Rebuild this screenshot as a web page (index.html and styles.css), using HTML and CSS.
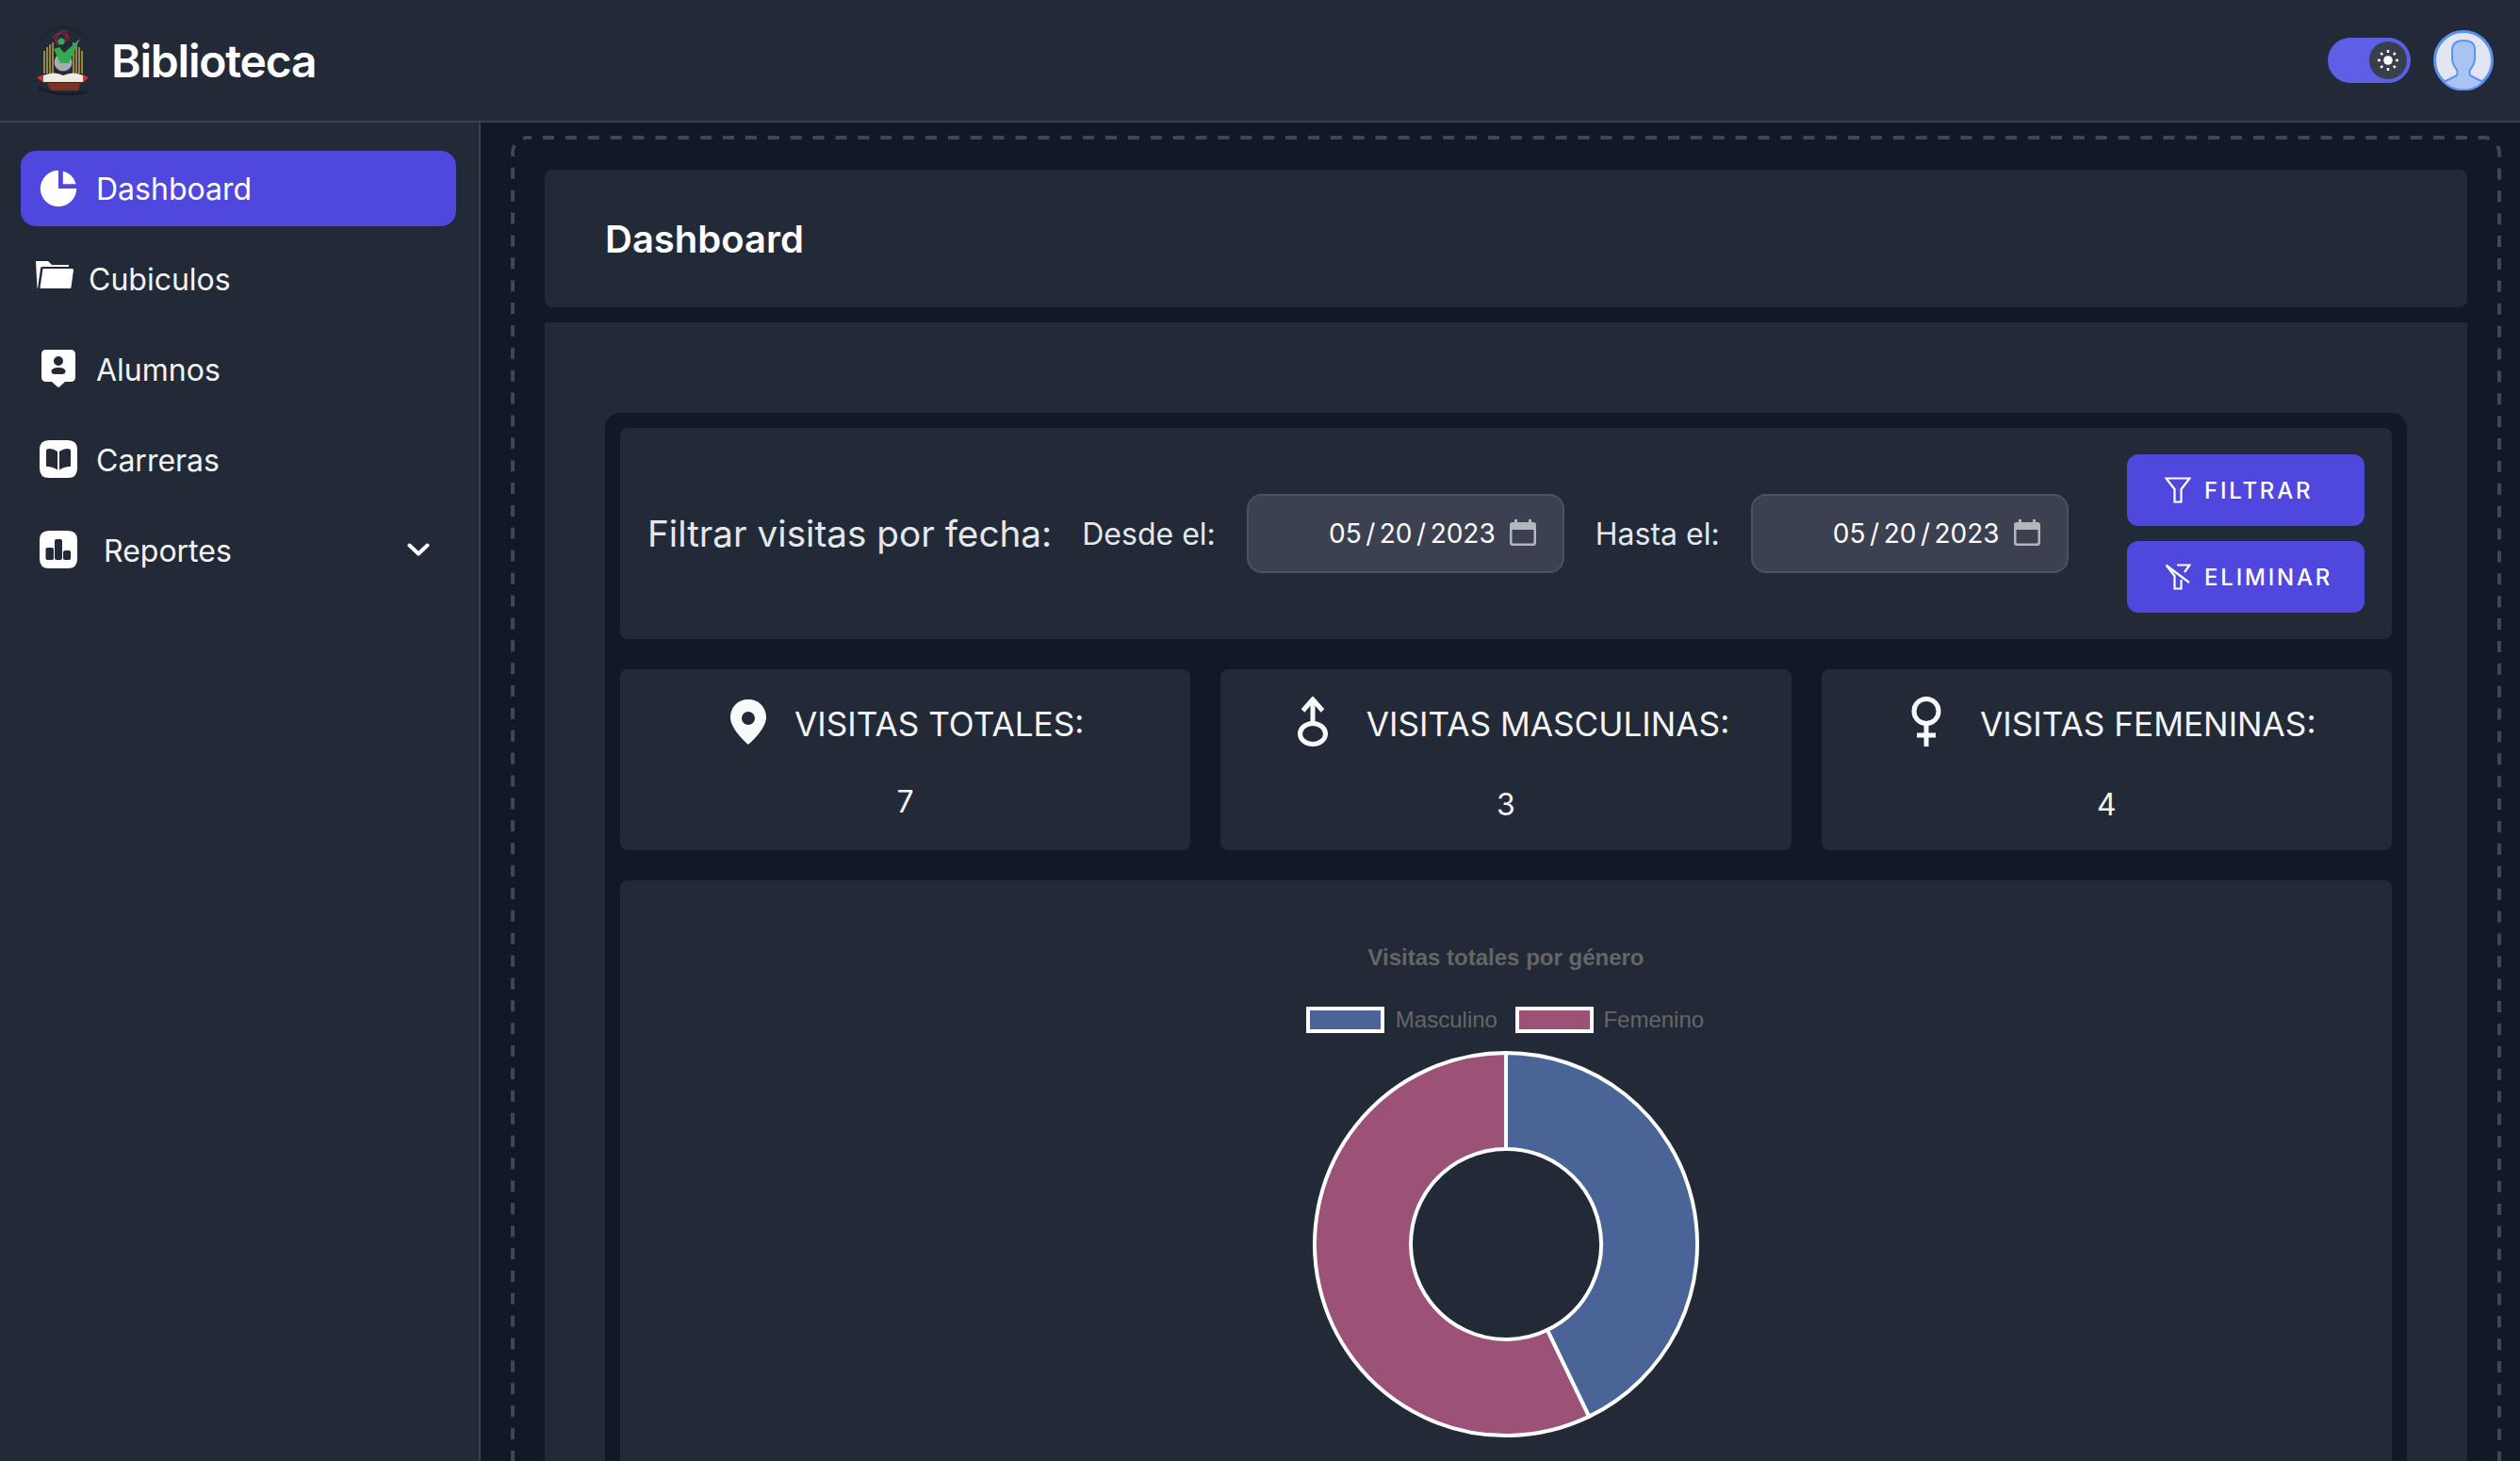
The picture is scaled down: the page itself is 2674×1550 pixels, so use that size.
FILE: index.html
```html
<!DOCTYPE html>
<html lang="en">
<head>
  <meta charset="UTF-8">
  <meta name="viewport" content="width=device-width, initial-scale=1.0">
  <title>Biblioteca</title>
  <link rel="stylesheet" href="styles.css">
</head>
<body>
  <header class="topbar">
    <div class="brand">
      <!-- school crest -->
      <svg class="crest" viewBox="39 24 56 80">
        <path id="crest-top" d="M41 46 Q66 14 93 46" fill="none"/>
        <text class="crest-text"><textPath href="#crest-top" startOffset="50%" text-anchor="middle">Instituto Tecnológico</textPath></text>
        <path d="M41 93 Q66 104 92 97" fill="none" stroke="#141a22" stroke-width="3.5" stroke-dasharray="2 1"/>
        <g fill="none" stroke="#d3b941" stroke-width="1.3">
          <path d="M47 78V54M50 78V50M53 78V47M56 78V45"/>
          <path d="M87 78V54M84 78V50M81 78V47M78 78V45"/>
        </g>
        <g fill="none" stroke="#a0232d" stroke-width="1.1">
          <ellipse cx="65" cy="40" rx="8" ry="4.500"/>
          <ellipse cx="65" cy="40" rx="4.500" ry="8" transform="rotate(30 65 40)"/>
        </g>
        <circle cx="67" cy="66" r="9.500" fill="#a8acb0"/>
        <circle cx="65" cy="44" r="3.500" fill="#35a852"/>
        <path d="M57 52 L63 50 L68 56 L85 41 L73 67 H64Z" fill="#35a852"/>
        <path d="M50 88 H85 L83 96 H54Z" fill="#7c3326"/>
        <path d="M39 82 L47 79 V88 L44 86Z" fill="#c9352b"/>
        <path d="M94 82 L87 79 V88 L90 86Z" fill="#c9352b"/>
        <path d="M46 80 Q58 75 67 80 Q78 75 88 80 V87 H46Z" fill="#eeeae0"/>
      </svg>
      <span class="brand-name">Biblioteca</span>
    </div>
    <div class="top-actions">
      <div class="toggle">
        <span class="toggle-knob">
          <svg width="24" height="24" viewBox="0 0 24 24" fill="none" stroke="#fff" stroke-width="2.4">
            <circle cx="12" cy="12" r="4.8" fill="#fff" stroke="none"/>
            <path d="M12 1v3M12 20v3M1 12h3M20 12h3M4.2 4.2l2 2M17.8 17.8l2 2M4.2 19.8l2-2M17.8 6.2l2-2"/>
          </svg>
        </span>
      </div>
      <svg class="avatar" viewBox="0 0 64 64">
        <circle cx="32" cy="32" r="30.5" fill="#e2e6f2" stroke="#5b93ee" stroke-width="3"/>
        <path d="M11 55 L25 48 Q26 46 25 42 Q20 36 20 30 L20 20 Q21 11 32 11 Q44 11 44 20 V30 Q44 36 39 42 Q38 46 39 48 L53 55 A30 30 0 0 1 11 55Z" fill="#a9c3f3" stroke="#5b93ee" stroke-width="2"/>
      </svg>
    </div>
  </header>

  <div class="layout">
    <aside class="sidebar">
      <a class="side-item active">
        <svg class="ic-dash" viewBox="0 0 20 20" fill="#fff"><path d="M2 10a8 8 0 018-8v8h8a8 8 0 11-16 0z"/><path d="M12 2.252A8.014 8.014 0 0117.748 8H12V2.252z"/></svg>
        Dashboard
      </a>
      <a class="side-item">
        <svg class="ic-folder" viewBox="0 0 40 29" fill="#fff"><path d="M0 0H13L17 4H35V6H7Q5 6 5 8L2 29H1.5Z"/><path d="M7.5 8H38.5Q40 8 40 9.5L37.5 27.5Q37.3 29 36 29H5L4.5 28Z"/></svg>
        Cubiculos
      </a>
      <a class="side-item">
        <svg class="ic-student" viewBox="0 0 36 40" fill="#fff" fill-rule="evenodd"><path d="M5 0H31Q36 0 36 5V29Q36 34 31 34H25L19 39.500Q18 40 17 39.500L11 34H5Q0 34 0 29V5Q0 0 5 0ZM18 7A5 5 0 1 0 18 17A5 5 0 1 0 18 7ZM18 19C13.500 19 10.500 20.500 10.500 23C10.500 25 12 26 14 26H22C24 26 25.500 25 25.500 23C25.500 20.500 22.500 19 18 19Z"/></svg>
        Alumnos
      </a>
      <a class="side-item">
        <svg class="ic-book" viewBox="0 0 40 40" fill="#fff" fill-rule="evenodd"><path d="M10 0H30Q40 0 40 10V30Q40 40 30 40H10Q0 40 0 30V10Q0 0 10 0ZM7 11V27Q7 28 8 28Q14 28 19 31.500V12Q13 8 8 9.500Q7 10 7 11ZM33 11V27Q33 28 32 28Q26 28 21 31.500V12Q27 8 32 9.500Q33 10 33 11Z"/></svg>
        Carreras
      </a>
      <a class="side-item">
        <svg class="ic-chart" viewBox="0 0 40 40" fill="#fff" fill-rule="evenodd"><path d="M10 0H30Q40 0 40 10V30Q40 40 30 40H10Q0 40 0 30V10Q0 0 10 0ZM8 18Q6.500 18 6.500 20V29Q6.500 31 8 31H13.500Q15 31 15 29V20Q15 18 13.500 18ZM18 9Q16 9 16 11V29Q16 31 18 31H22Q24 31 24 29V11Q24 9 22 9ZM27 21Q25 21 25 23V29Q25 31 27 31H31.500Q33 31 33 29V23Q33 21 31.500 21Z"/></svg>
        <span class="grow">Reportes</span>
        <svg class="chevron" viewBox="0 0 24 14" fill="none" stroke="#fff" stroke-width="4" stroke-linecap="round" stroke-linejoin="round"><path d="M2.500 2.500L12 11.500L21.500 2.500"/></svg>
      </a>
    </aside>

    <main class="main">
      <div class="dash-box">
        <svg class="dash-line"><rect class="dash-rect" x="2" y="2" rx="16" ry="16"/></svg>

        <div class="page-head"><h1>Dashboard</h1></div>

        <section class="panel">
          <div class="panel-inner">
            <div class="filter-card">
              <span class="filter-title">Filtrar visitas por fecha:</span>
              <label class="filter-label">Desde el:</label>
              <div class="date-field">
                <span class="date-text">05<i>/</i>20<i>/</i>2023</span>
                <svg class="cal" viewBox="0 0 28 28"><path d="M5 0H8V3H20V0H23V3H25Q28 3 28 6V25Q28 28 25 28H3Q0 28 0 25V6Q0 3 3 3H5ZM2.500 11V24Q2.500 25.500 4 25.500H24Q25.500 25.500 25.500 24V11Z" fill="#b3b6bd" fill-rule="evenodd"/></svg>
              </div>
              <label class="filter-label">Hasta el:</label>
              <div class="date-field">
                <span class="date-text">05<i>/</i>20<i>/</i>2023</span>
                <svg class="cal" viewBox="0 0 28 28"><path d="M5 0H8V3H20V0H23V3H25Q28 3 28 6V25Q28 28 25 28H3Q0 28 0 25V6Q0 3 3 3H5ZM2.500 11V24Q2.500 25.500 4 25.500H24Q25.500 25.500 25.500 24V11Z" fill="#b3b6bd" fill-rule="evenodd"/></svg>
              </div>
              <div class="filter-btns">
                <button class="btn">
                  <svg viewBox="0 0 28 28" fill="none" stroke="#fff" stroke-width="2.200"><path d="M1.500 1.500H26.500L17.500 13V26.500H10.500V13Z"/></svg>
                  FILTRAR
                </button>
                <button class="btn">
                  <svg viewBox="0 0 28 28" fill="none" stroke="#fff" stroke-width="2.200"><path d="M13 1.500H26.500L21 9M2 2L26 20M1.500 1.500L10.500 13V26.500H17.500V17"/></svg>
                  ELIMINAR
                </button>
              </div>
            </div>

            <div class="stats">
              <div class="stat stat-total">
                <div class="stat-head">
                  <svg class="ic-pin" viewBox="0 0 38 48" fill="#f9fafb" fill-rule="evenodd"><path d="M19 0C8 0 0 8 0 19C0 32 19 48 19 48S38 32 38 19C38 8 30 0 19 0ZM19 13A7 7 0 1 1 19 27A7 7 0 1 1 19 13Z"/></svg>
                  <span class="stat-label">VISITAS TOTALES:</span>
                </div>
                <div class="stat-value">7</div>
              </div>
              <div class="stat stat-male">
                <div class="stat-head">
                  <svg class="ic-gender" viewBox="0 0 32 53" fill="none" stroke="#f9fafb" stroke-width="5"><ellipse cx="16" cy="39.500" rx="13.500" ry="11"/><path d="M16 28V3M5.500 15L16 3L26.500 15"/></svg>
                  <span class="stat-label">VISITAS MASCULINAS:</span>
                </div>
                <div class="stat-value">3</div>
              </div>
              <div class="stat stat-female">
                <div class="stat-head">
                  <svg class="ic-gender" viewBox="0 0 32 53" fill="none" stroke="#f9fafb" stroke-width="5"><circle cx="16" cy="15.500" r="13"/><path d="M16 29V53M6 41H26"/></svg>
                  <span class="stat-label">VISITAS FEMENINAS:</span>
                </div>
                <div class="stat-value">4</div>
              </div>
            </div>

            <div class="chart-card">
              <div class="chart-title">Visitas totales por género</div>
              <div class="legend">
                <span class="swatch swatch-blue"></span><span class="legend-text">Masculino</span>
                <span class="swatch swatch-pink"></span><span class="legend-text">Femenino</span>
              </div>
              <svg class="donut" viewBox="0 0 414 414" stroke="#fff" stroke-width="4">
                <path d="M207 4A203 203 0 0 1 295.080 389.900L250.820 298A101 101 0 0 0 207 106Z" fill="#4a6498"/>
                <path d="M295.080 389.900A203 203 0 1 1 207 4L207 106A101 101 0 1 0 250.820 298Z" fill="#9b5276"/>
              </svg>
            </div>
          </div>
        </section>
      </div>
    </main>
  </div>
</body>
</html>
```

FILE: styles.css
```css
html, body {
  height: 100%;
  margin: 0;
  overflow: hidden;
}
body {
  display: flex;
  flex-direction: column;
  background-color: #121926;
  color: #fff;
  font-family: Inter, "Noto Sans", sans-serif;
}

/* top bar */
.topbar {
  display: flex;
  align-items: center;
  justify-content: space-between;
  flex: none;
  height: 128px;
  padding: 0 28px 0 39px;
  background-color: #232a37;
  border-bottom: 2px solid #3a404d;
}
.brand {
  display: flex;
  align-items: center;
  gap: 23px;
}
.crest {
  width: 56px;
  height: 80px;
}
.crest-text {
  font-size: 6.500px;
  fill: #141a22;
  font-family: "Liberation Serif", serif;
}
.brand-name {
  font-size: 48px;
  font-weight: 600;
  letter-spacing: -1.200px;
}
.top-actions {
  display: flex;
  align-items: center;
  gap: 24px;
}
.toggle {
  display: flex;
  align-items: center;
  justify-content: flex-end;
  width: 88px;
  height: 48px;
  padding-right: 4px;
  box-sizing: border-box;
  border-radius: 24px;
  background-color: #5d5fe6;
}
.toggle-knob {
  display: flex;
  align-items: center;
  justify-content: center;
  width: 40px;
  height: 40px;
  border-radius: 50%;
  background-color: #393e4d;
}
.avatar {
  width: 64px;
  height: 64px;
}

/* sidebar */
.layout {
  display: flex;
  flex: 1;
  min-height: 0;
}
.sidebar {
  flex: none;
  display: flex;
  flex-direction: column;
  gap: 16px;
  box-sizing: border-box;
  width: 510px;
  padding: 30px 24px 0 22px;
  background-color: #232a37;
  border-right: 2px solid #3a404d;
}
.side-item {
  display: flex;
  align-items: center;
  height: 80px;
  padding-left: 20px;
  border-radius: 16px;
  font-size: 32px;
  color: #f3f4f6;
}
.side-item.active {
  background-color: #5047de;
  color: #fff;
}
.grow {
  flex: 1;
}
.ic-dash {
  width: 48px;
  height: 48px;
  margin: 0 16px 0 -4px;
}
.ic-folder {
  width: 40px;
  height: 29px;
  margin: 0 16px 9px -4px;
}
.ic-student {
  width: 36px;
  height: 40px;
  margin: 0 22px 2px 2px;
}
.ic-book {
  width: 40px;
  height: 40px;
  margin: 0 20px 2px 0;
}
.ic-chart {
  width: 40px;
  height: 40px;
  margin: 0 28px 2px 0;
}
.chevron {
  width: 24px;
  height: 14px;
  margin: 0 28px 2px 0;
}

/* main area */
.main {
  flex: 1;
  min-width: 0;
  padding: 14px 20px 0 32px;
}
.dash-box {
  position: relative;
  display: flex;
  flex-direction: column;
  gap: 16px;
  box-sizing: border-box;
  height: 1813px;
  padding: 36px;
}
.dash-line {
  position: absolute;
  top: 0;
  left: 0;
  width: 100%;
  height: 100%;
  pointer-events: none;
}
.dash-rect {
  width: calc(100% - 4px);
  height: calc(100% - 4px);
  fill: none;
  stroke: #3f4654;
  stroke-width: 4;
  stroke-dasharray: 12 11.880;
  stroke-dashoffset: -16;
}
.page-head {
  display: flex;
  align-items: center;
  flex: none;
  height: 146px;
  padding-left: 64px;
  background-color: #232a37;
  border-radius: 8px;
}
.page-head h1 {
  margin: 0;
  font-size: 40px;
  font-weight: 600;
}
.panel {
  flex: 1;
  padding: 96px 64px 0;
  background-color: #232a37;
}
.panel-inner {
  display: flex;
  flex-direction: column;
  gap: 32px;
  padding: 16px;
  background-color: #121926;
  border-radius: 16px;
}

/* filter row */
.filter-card {
  display: flex;
  align-items: center;
  padding: 28px 29px;
  background-color: #232a37;
  border-radius: 8px;
  color: #e5e7eb;
}
.filter-title {
  font-size: 38.700px;
  margin-right: 32px;
}
.filter-label {
  font-size: 32px;
  margin-right: 33px;
}
.date-field {
  display: flex;
  align-items: center;
  justify-content: flex-end;
  gap: 15px;
  box-sizing: border-box;
  width: 337px;
  height: 84px;
  padding-right: 28px;
  margin-right: 33px;
  background-color: #3b4150;
  border: 2px solid #4c5260;
  border-radius: 16px;
}
.date-text {
  font-size: 28px;
  color: #fff;
}
.date-text i {
  font-style: normal;
  margin: 0 4.500px;
}
.cal {
  width: 28px;
  height: 28px;
  margin-bottom: 2px;
}
.filter-btns {
  display: flex;
  flex-direction: column;
  gap: 16px;
  margin-left: auto;
}
.btn {
  display: flex;
  align-items: center;
  gap: 14px;
  width: 252px;
  height: 76px;
  padding: 0 0 0 40px;
  border: none;
  border-radius: 12px;
  background-color: #5047de;
  color: #fff;
  font-family: inherit;
  font-size: 24px;
  font-weight: 500;
  letter-spacing: 2.800px;
}
.btn svg {
  width: 28px;
  height: 28px;
}

/* stat cards */
.stats {
  display: grid;
  grid-template-columns: repeat(3, 1fr);
  gap: 32px;
}
.stat {
  height: 192px;
  padding-top: 29px;
  box-sizing: border-box;
  background-color: #232a37;
  border-radius: 8px;
  text-align: center;
}
.stat-head {
  display: flex;
  align-items: center;
  justify-content: center;
  gap: 41px;
  height: 53px;
  font-size: 35.200px;
  color: #f3f4f6;
}
.stat-label {
  padding-top: 4px;
}
.stat-total .stat-head {
  gap: 30px;
  padding-left: 4px;
}
.stat-male .stat-head {
  padding-left: 16px;
}
.stat-female .stat-head {
  padding-left: 15px;
}
.ic-pin {
  width: 38px;
  height: 48px;
}
.ic-gender {
  width: 32px;
  height: 53px;
}
.stat-value {
  margin-top: 38px;
  font-size: 32px;
  line-height: 48px;
  color: #f3f4f6;
}
.stat-total .stat-value {
  margin-top: 35px;
}

/* chart */
.chart-card {
  display: flex;
  flex-direction: column;
  align-items: center;
  min-height: 700px;
  padding-top: 68px;
  background-color: #232a37;
  border-radius: 8px;
  font-family: "Liberation Sans", Arial, sans-serif;
  color: #666;
}
.chart-title {
  font-size: 24px;
  font-weight: 700;
  line-height: 28px;
}
.legend {
  display: flex;
  align-items: center;
  height: 28px;
  margin-top: 38px;
  margin-right: 2px;
  font-size: 24px;
}
.swatch {
  box-sizing: border-box;
  width: 83px;
  height: 28px;
  margin-right: 12px;
  border: 4px solid #fff;
}
.swatch-blue {
  background-color: #4a6498;
}
.swatch-pink {
  background-color: #9b5276;
  margin-right: 10.500px;
}
.legend-text {
  margin-right: 19px;
}
.legend-text:last-child {
  margin-right: 0;
}
.donut {
  width: 414px;
  height: 414px;
  margin-top: 17px;
}
```
